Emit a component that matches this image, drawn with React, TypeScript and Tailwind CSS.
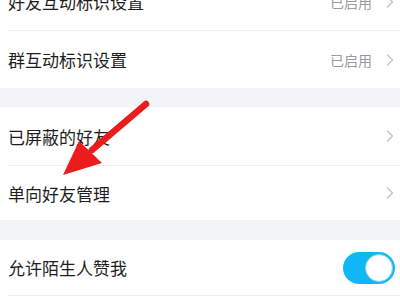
import React from 'react';

const font = { fontFamily: '"Noto Sans CJK SC", "Noto Sans", sans-serif' };

function Chevron() {
    return (
        <svg width="8" height="12" viewBox="0 0 8 12" className="shrink-0">
            <polyline points="1.5,1 6.5,6 1.5,11" fill="none" stroke="#c4c4c8" strokeWidth="1.4" strokeLinecap="round" strokeLinejoin="round" />
        </svg>
    );
}

function Row({ label, value, height, divider, children }: { label: string; value?: string; height: string; divider?: boolean; children?: React.ReactNode }) {
    return (
        <div className="bg-white pl-[8px]">
            <div className={`flex items-center justify-between pr-[6px] ${height} ${divider ? 'border-b border-[#efeff2]' : ''}`}>
                <span className="text-[17px] text-[#1e1e1e] leading-none">{label}</span>
                {children ?? (
                    <div className="flex items-center gap-[14px]">
                        {value && <span className="text-[14px] text-[#9a9a9e] leading-none">{value}</span>}
                        <Chevron />
                    </div>
                )}
            </div>
        </div>
    );
}

function Toggle() {
    return (
        <div className="mr-[-1px] flex h-[32px] w-[52px] items-center justify-end rounded-full bg-[#12b7f5] px-[2px]">
            <div className="h-[28px] w-[28px] rounded-full border border-[#7fd3ee] bg-white" />
        </div>
    );
}

export default function App() {
    return (
        <div className="relative h-[300px] w-[400px] overflow-hidden bg-white" style={font}>
            <div className="mt-[-27px] flex flex-col">
                <Row label="好友互动标识设置" value="已启用" height="h-[58px]" divider />
                <Row label="群互动标识设置" value="已启用" height="h-[57px]" />
                <div className="h-[19px] bg-[#f3f4f7]" />
                <Row label="已屏蔽的好友" height="h-[59px]" divider />
                <Row label="单向好友管理" height="h-[54px]" />
                <div className="h-[20px] bg-[#f3f4f7]" />
                <Row label="允许陌生人赞我" height="h-[56px]" divider>
                    <Toggle />
                </Row>
            </div>
            <svg className="pointer-events-none absolute left-0 top-0" width="400" height="300" viewBox="0 0 400 300">
                <line x1="146" y1="104" x2="92" y2="150" stroke="#ea1c1c" strokeWidth="6.5" strokeLinecap="round" />
                <polygon points="63,175 79,141 102,163" fill="#ea1c1c" />
            </svg>
        </div>
    );
}
